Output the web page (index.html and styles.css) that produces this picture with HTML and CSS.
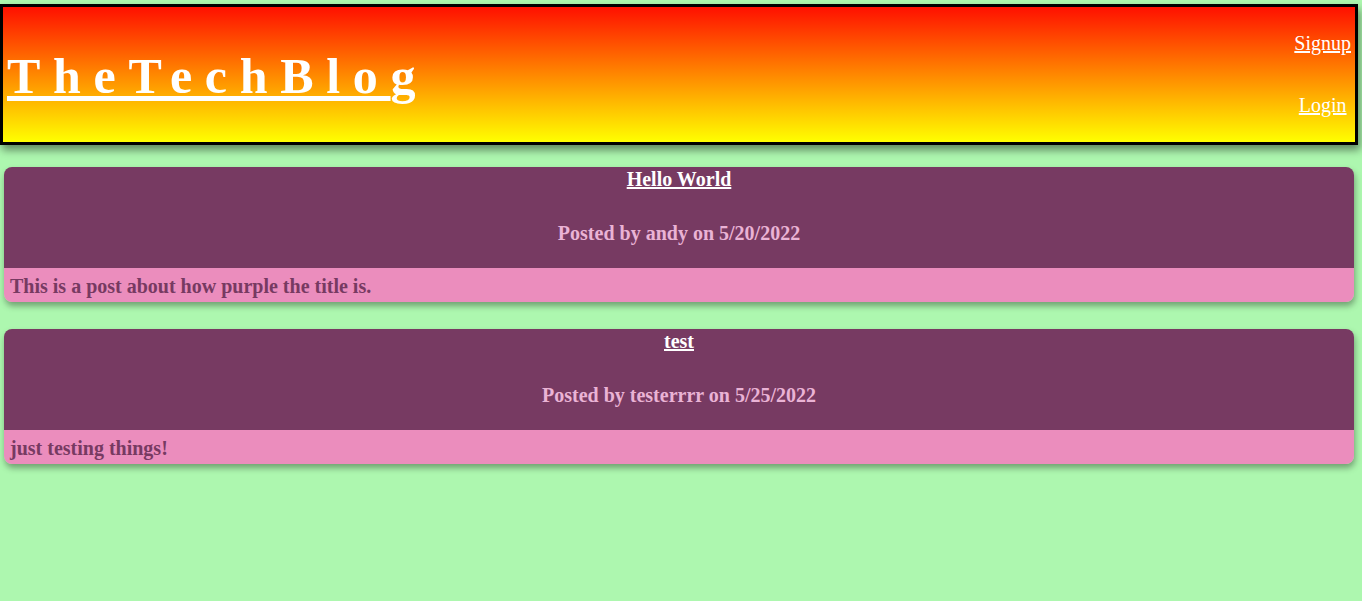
FILE: index.html
```html
<!DOCTYPE html>
<html lang="en">
<head>
<meta charset="utf-8">
<title>The Tech Blog</title>
<link rel="stylesheet" href="styles.css">
</head>
<body>
<header class="site-header">
  <h1 class="brand"><a href="#">TheTechBlo<span class="brand-last">g</span></a></h1>
  <nav class="nav">
    <a href="#">Signup</a>
    <a href="#">Login</a>
  </nav>
</header>
<main class="posts">
  <article class="post">
    <div class="post-head">
      <a class="post-title" href="#">Hello World</a>
      <p class="post-meta">Posted by andy on 5/20/2022</p>
    </div>
    <p class="post-body">This is a post about how purple the title is.</p>
  </article>
  <article class="post">
    <div class="post-head">
      <a class="post-title" href="#">test</a>
      <p class="post-meta">Posted by testerrrr on 5/25/2022</p>
    </div>
    <p class="post-body">just testing things!</p>
  </article>
</main>
</body>
</html>
```
FILE: styles.css
```css
html, body {
  margin: 0;
  padding: 0;
}
body {
  background: #adf7af;
  font-family: "Liberation Serif", "Times New Roman", serif;
  min-height: 601px;
}
.site-header {
  margin: 4px 4px 0 0;
  height: 135px;
  border: 3px solid #000;
  background: linear-gradient(#ff1000, #ffff00);
  box-shadow: 2px 5px 8px rgba(0, 0, 0, 0.45);
  display: flex;
  justify-content: space-between;
  align-items: flex-start;
}
.brand {
  margin: 40px 0 0 4px;
  font-size: 50px;
  font-weight: bold;
  letter-spacing: 12.7px;
  line-height: normal;
}
.brand a {
  color: #fff;
  text-decoration: underline;
}
.brand-last {
  letter-spacing: 0;
}
.nav {
  display: flex;
  flex-direction: column;
  align-items: center;
  gap: 39px;
  padding: 25px 4px 0 0;
}
.nav a {
  color: #fff;
  font-size: 20px;
  line-height: 23px;
  text-decoration: underline;
}
.posts {
  margin: 22px 8px 0 4px;
  display: flex;
  flex-direction: column;
  gap: 27px;
}
.post {
  border-radius: 8px;
  overflow: hidden;
  box-shadow: 1px 4px 6px rgba(0, 0, 0, 0.35);
}
.post-head {
  background: #773a62;
  text-align: center;
  padding: 1px 0 23px;
  display: flex;
  flex-direction: column;
  align-items: center;
}
.post-title {
  color: #fff;
  font-size: 20px;
  font-weight: bold;
  line-height: 23px;
  text-decoration: underline;
}
.post-meta {
  margin: 31px 0 0;
  color: #eab3d5;
  font-size: 20px;
  font-weight: bold;
  line-height: 23px;
}
.post-body {
  margin: 0;
  background: #eb8dbd;
  color: #773a62;
  font-size: 20px;
  font-weight: bold;
  line-height: 23px;
  padding: 7px 6px 4px;
}
```
